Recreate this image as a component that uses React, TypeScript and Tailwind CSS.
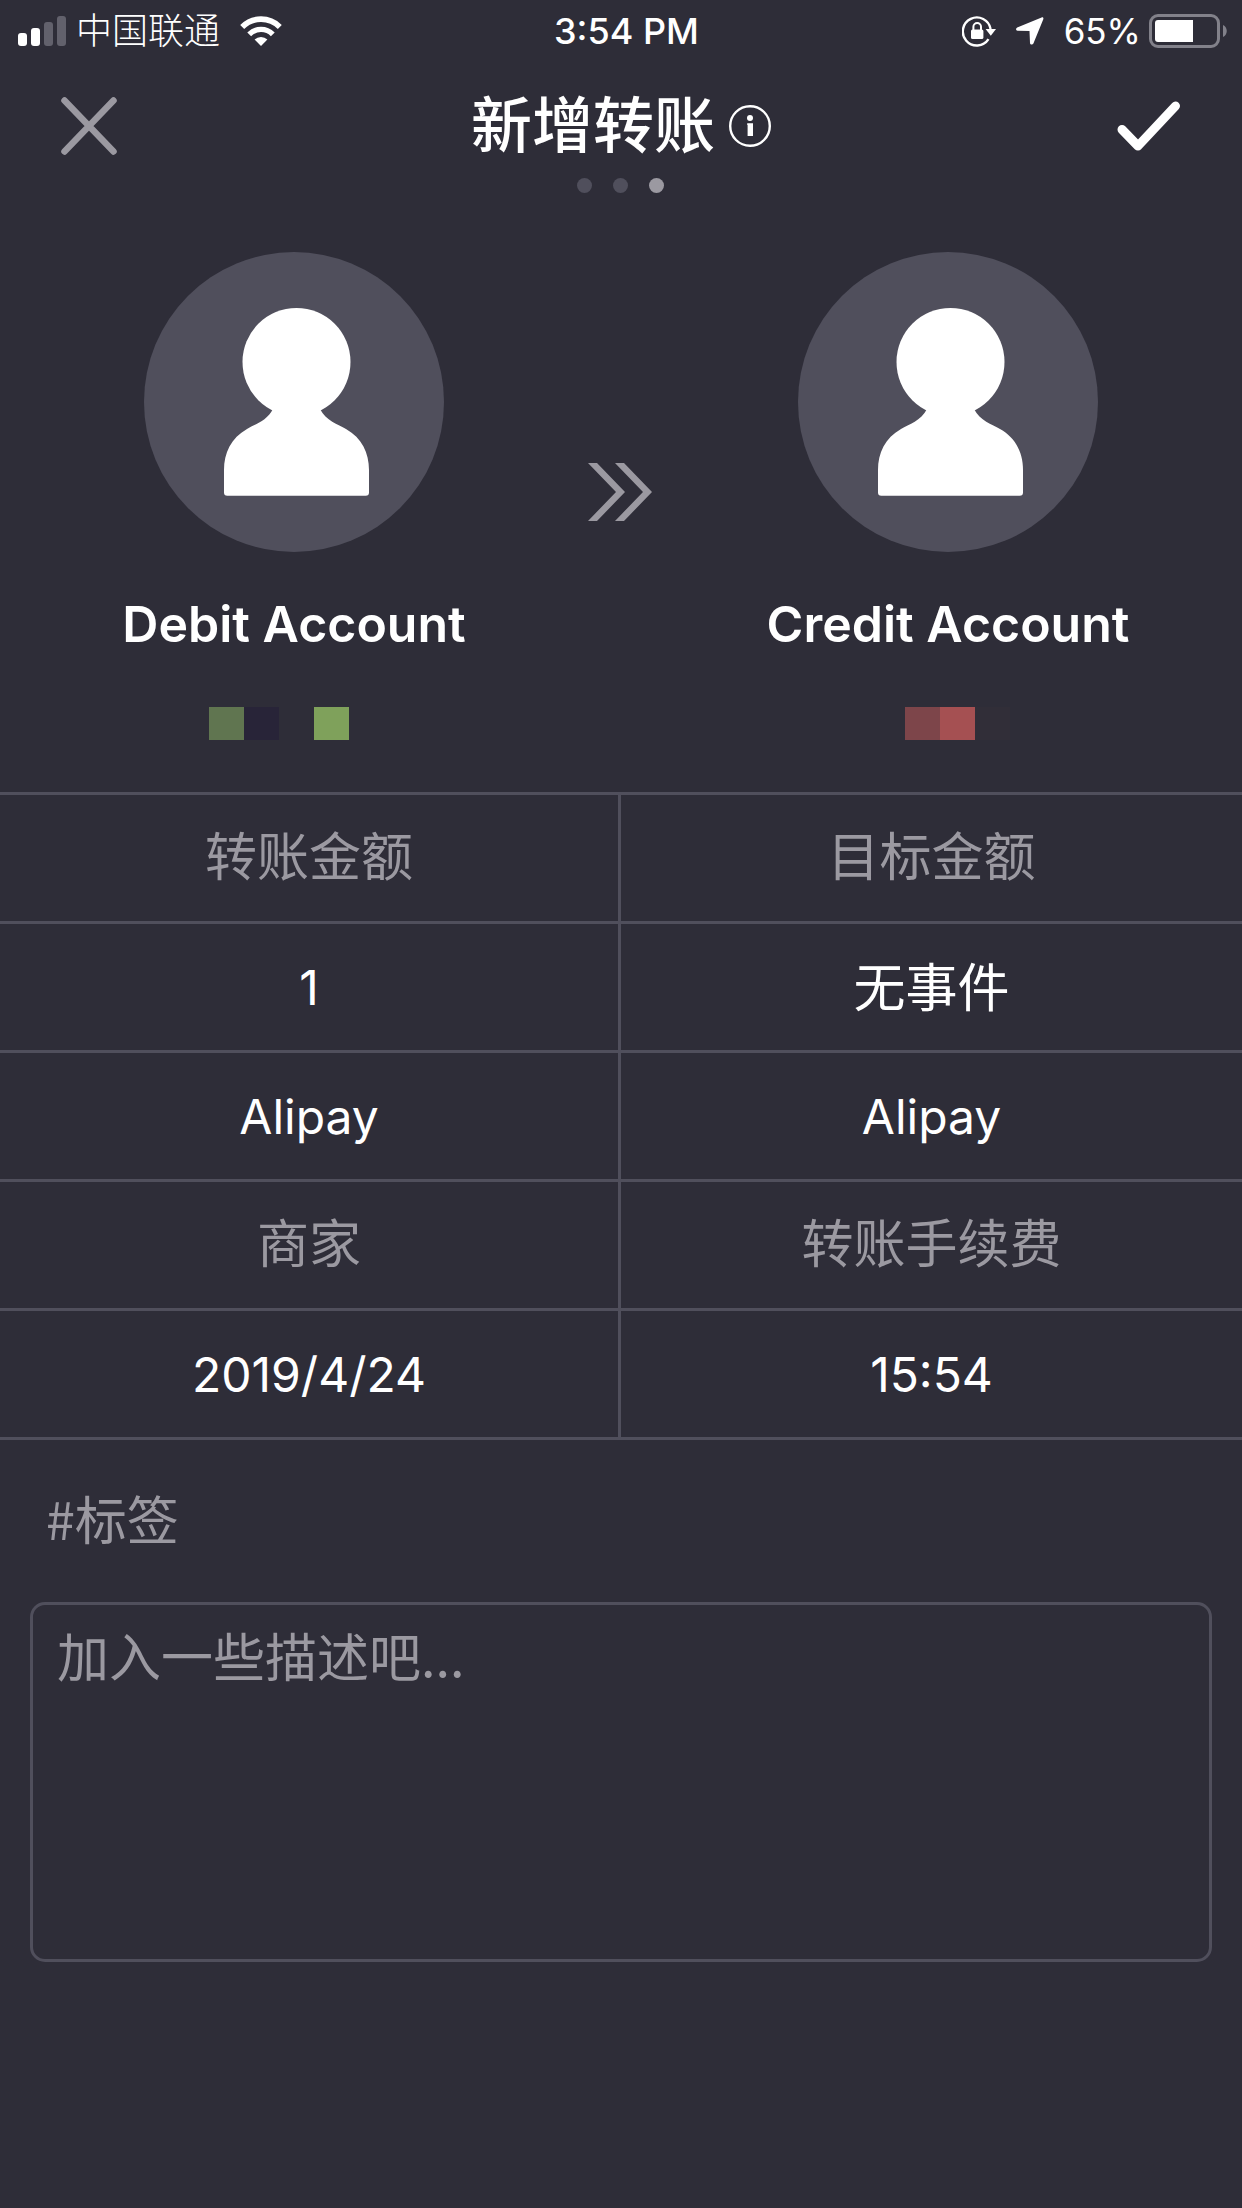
import { ReactNode } from "react";
import clsx from "clsx";

type Account = {
  name: string;
  balance: string[];
  balanceClassName: string;
};

type Field = {
  label: string;
  value?: string;
  latin?: boolean;
};

const debit: Account = {
  name: "Debit Account",
  balance: ["bg-[#607550]", "bg-[#282438]", "bg-transparent", "bg-[#7fa15b]"],
  balanceClassName: "pr-[30px]",
};

const credit: Account = {
  name: "Credit Account",
  balance: ["bg-[#7d454a]", "bg-[#a55052]", "bg-[#312e38]"],
  balanceClassName: "pl-[18px]",
};

const fields: Field[] = [
  { label: "转账金额" },
  { label: "目标金额" },
  { label: "数量", value: "1", latin: true },
  { label: "事件", value: "无事件" },
  { label: "转出账户", value: "Alipay", latin: true },
  { label: "转入账户", value: "Alipay", latin: true },
  { label: "商家" },
  { label: "转账手续费" },
  { label: "日期", value: "2019/4/24", latin: true },
  { label: "时间", value: "15:54", latin: true },
];

function SignalIcon() {
  return (
    <div className="flex items-end gap-1">
      <span className="h-[13px] w-[9px] rounded-[3px] bg-white" />
      <span className="h-[18px] w-[9px] rounded-[3px] bg-white" />
      <span className="h-[24px] w-[9px] rounded-[3px] bg-[#62616c]" />
      <span className="h-[30px] w-[9px] rounded-[3px] bg-[#62616c]" />
    </div>
  );
}

function WifiIcon() {
  return (
    <svg width="42" height="30" viewBox="0 0 42 30" fill="none">
      <path
        d="M2.2 10.9a26.6 26.6 0 0 1 37.6 0"
        stroke="#fff"
        strokeWidth="5.6"
      />
      <path
        d="M9.2 18.3a16.7 16.7 0 0 1 23.6 0"
        stroke="#fff"
        strokeWidth="5.4"
      />
      <path d="M14.6 23.6a9 9 0 0 1 12.8 0L21 30z" fill="#fff" />
    </svg>
  );
}

function RotationLockIcon() {
  return (
    <svg width="34" height="32" viewBox="0 0 34 32" fill="none">
      <path
        d="M26.5 24.2A14 14 0 1 1 28.6 14"
        stroke="#fff"
        strokeWidth="2.4"
      />
      <path d="M23.6 14H34l-5.2 6.8z" fill="#fff" />
      <rect x="9" y="14.5" width="12.4" height="9.5" rx="1.5" fill="#fff" />
      <path
        d="M11.4 15v-3.2a3.8 3.8 0 0 1 7.6 0V15"
        stroke="#fff"
        strokeWidth="2"
      />
    </svg>
  );
}

function LocationIcon() {
  return (
    <svg width="28" height="28" viewBox="0 0 28 28" fill="#fff">
      <path d="M25.6.5 1.2 10.6c-1.6.7-1.5 3 .3 3.1l12 .3.5 12c.1 1.8 2.7 2.1 3.4.5L27.3 2.3C27.8 1 26.8 0 25.6.5z" />
    </svg>
  );
}

function BatteryIcon() {
  return (
    <svg width="78" height="34" viewBox="0 0 78 34" fill="none">
      <rect
        x="1.5"
        y="1.5"
        width="68"
        height="31"
        rx="7.5"
        stroke="#82818a"
        strokeWidth="3"
      />
      <path d="M9 6h35v22H9a3 3 0 0 1-3-3V9a3 3 0 0 1 3-3z" fill="#fff" />
      <path d="M74 11c5 2 5 10 0 12z" fill="#82818a" />
    </svg>
  );
}

function StatusBar() {
  return (
    <div className="grid h-[62px] grid-cols-[1fr_auto_1fr] items-center pr-[15px] pl-[18px] text-4xl">
      <div className="flex items-center gap-2.5">
        <SignalIcon />
        <span className="font-light">中国联通</span>
        <div className="pl-2.5">
          <WifiIcon />
        </div>
      </div>
      <span className="pl-2 font-medium">3:54 PM</span>
      <div className="flex items-center justify-end gap-2">
        <RotationLockIcon />
        <div className="px-3">
          <LocationIcon />
        </div>
        <span className="text-[35px]">65%</span>
        <BatteryIcon />
      </div>
    </div>
  );
}

function Header() {
  return (
    <header className="grid grid-cols-[1fr_auto_1fr] items-center px-14">
      <button type="button" aria-label="关闭" className="justify-self-start p-1">
        <svg width="58" height="60" viewBox="0 0 58 60" fill="none">
          <path
            d="M4.5 4.5 53.5 55.5M53.5 4.5 4.5 55.5"
            stroke="#9b99a1"
            strokeWidth="6.5"
            strokeLinecap="round"
          />
        </svg>
      </button>
      <div className="flex items-center gap-3.5">
        <h1 className="text-[61px] leading-[128px] font-medium">新增转账</h1>
        <button type="button" aria-label="说明">
          <svg width="42" height="42" viewBox="0 0 42 42" fill="none">
            <circle cx="21" cy="21" r="19.8" stroke="#fff" strokeWidth="2.4" />
            <circle cx="21" cy="13" r="3" fill="#fff" />
            <path d="M18.2 18.3h5.8v12.7h-5.4V20h-.4z" fill="#fff" />
          </svg>
        </button>
      </div>
      <button type="button" aria-label="保存" className="justify-self-end pr-1.5">
        <svg width="64" height="52" viewBox="0 0 64 52" fill="none">
          <path
            d="M6 29.5 22 46 59.5 6"
            stroke="#fff"
            strokeWidth="9"
            strokeLinecap="round"
            strokeLinejoin="round"
          />
        </svg>
      </button>
    </header>
  );
}

function PageDots() {
  return (
    <div className="flex justify-center gap-[21px] pr-0.5">
      <span className="size-[15px] rounded-full bg-[#504f5c]" />
      <span className="size-[15px] rounded-full bg-[#504f5c]" />
      <span className="size-[15px] rounded-full bg-[#9b99a1]" />
    </div>
  );
}

function AccountCard({ account }: { account: Account }) {
  return (
    <button type="button" className="flex flex-1 flex-col items-center">
      <svg width="300" height="300" viewBox="0 0 300 300">
        <circle cx="150" cy="150" r="150" fill="#504f5c" />
        <circle cx="152.5" cy="110" r="54" fill="#fff" />
        <path
          d="M129 157C123 169 111 172 103 177C87 186 80 201 80 218V240.5Q80 243.8 83.3 243.8H221.7Q225 243.8 225 240.5V218C225 201 218 186 202 177C194 172 182 169 176 157Z"
          fill="#fff"
        />
      </svg>
      <span className="mt-[34px] text-[50px] leading-[76px] font-semibold">
        {account.name}
      </span>
      <span className={clsx("mt-[45px] flex", account.balanceClassName)}>
        {account.balance.map((color, i) => (
          <span key={i} className={clsx("h-[33px] w-[35px]", color)} />
        ))}
      </span>
    </button>
  );
}

function Cell({ children }: { children: ReactNode }) {
  return (
    <div className="flex h-[129px] border-b-3 border-[#504f5c] odd:border-r-3">
      {children}
    </div>
  );
}

function App() {
  return (
    <main className="min-h-screen bg-[#2e2d38] font-[Inter,'Noto_Sans_CJK_SC',sans-serif] text-white">
      <StatusBar />
      <Header />
      <div className="-mt-3">
        <PageDots />
      </div>

      <section className="mt-[59px] flex">
        <AccountCard account={debit} />
        {/* Transfer direction */}
        <svg
          className="mt-[211px] shrink-0"
          width="66"
          height="58"
          viewBox="0 0 66 58"
          fill="#9b99a1"
        >
          <path d="M0 0h9l28 29L9 58H0l28-29z" />
          <path d="M27 0h9l28 29-28 29h-9l28-29z" />
        </svg>
        <AccountCard account={credit} />
      </section>

      <form>
        <div className="mt-[52px] grid grid-cols-2 border-t-3 border-[#504f5c] text-[52px]">
          {fields.map(({ label, value, latin }) => (
            <Cell key={label}>
              {value ? (
                <button
                  type="button"
                  aria-label={label}
                  className={clsx("flex-1", latin ? "pt-0.5 text-5xl" : "pt-1")}
                >
                  {value}
                </button>
              ) : (
                <input
                  aria-label={label}
                  placeholder={label}
                  className="w-full min-w-0 text-center outline-none placeholder:text-[#9b99a1]"
                />
              )}
            </Cell>
          ))}
        </div>

        <div className="font-['Noto_Sans_CJK_SC',sans-serif] text-[52px]">
          <input
            aria-label="标签"
            placeholder="#标签"
            className="h-[162px] w-full px-[46px] pb-2 outline-none placeholder:text-[#9b99a1]"
          />
          <div className="px-[30px]">
            <textarea
              aria-label="描述"
              placeholder="加入一些描述吧..."
              className="block h-[360px] w-full resize-none rounded-[15px] border-3 border-[#504f5c] px-6 py-3 leading-[76px] outline-none placeholder:text-[#9b99a1]"
            />
          </div>
        </div>
      </form>
    </main>
  );
}

export default App;
